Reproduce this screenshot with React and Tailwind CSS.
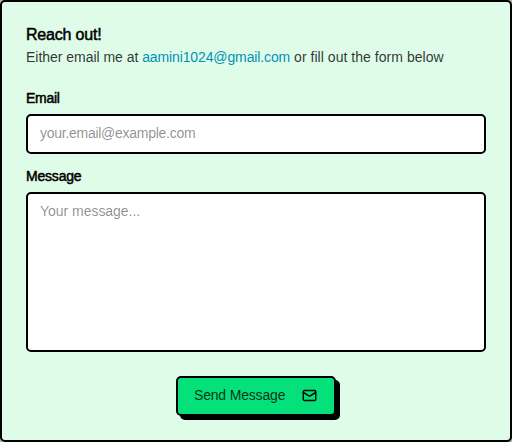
import { Mail } from "lucide-react";

export default function App() {
  return (
    <div className="h-[442px] w-[512px] bg-[#a9b9ae]">
      <form className="flex h-full flex-col rounded-[5px] border-2 border-black bg-[#dffce9] px-6 pt-5 font-['Liberation_Sans',sans-serif] text-sm text-black">
        <h3 className="pt-px text-base leading-6 font-normal tracking-[-0.2px] [-webkit-text-stroke:0.5px_black]">Reach out!</h3>
        <p className="flex h-[22px] items-center pb-0.5 whitespace-pre text-black/80">
          <span className="tracking-[-0.03px]">Either email me at </span>
          <a className="tracking-[-0.12px] text-[#0092b8]">aamini1024@gmail.com</a>
          <span className="tracking-[0.04px]"> or fill out the form below</span>
        </p>
        <label className="mt-[18px] flex h-[22px] items-center tracking-[-0.3px] [-webkit-text-stroke:0.5px_black]">Email</label>
        <input
          className="mt-[5px] h-10 w-full rounded-[5px] border-2 border-black bg-white px-3 pb-0.5 tracking-[-0.27px] placeholder:text-black/45"
          placeholder="your.email@example.com"
        />
        <label className="mt-3 flex h-[22px] items-center pb-0.5 tracking-[-0.2px] [-webkit-text-stroke:0.5px_black]">Message</label>
        <textarea
          className="mt-1 h-40 w-full resize-none rounded-[5px] border-2 border-black bg-white px-3 py-[7px] leading-5 tracking-[-0.03px] placeholder:text-black/45"
          placeholder="Your message..."
        />
        <button
          type="button"
          className="mt-6 flex h-10 w-40 items-center justify-between self-center rounded-[5px] border-2 border-black bg-[#05e17a] pr-[17px] pb-px pl-4 shadow-[4px_4px_0_0_#000]"
        >
          <span className="pb-px tracking-[-0.18px] text-black/80">Send Message</span>
          <Mail size={15} strokeWidth={2.2} />
        </button>
      </form>
    </div>
  );
}
